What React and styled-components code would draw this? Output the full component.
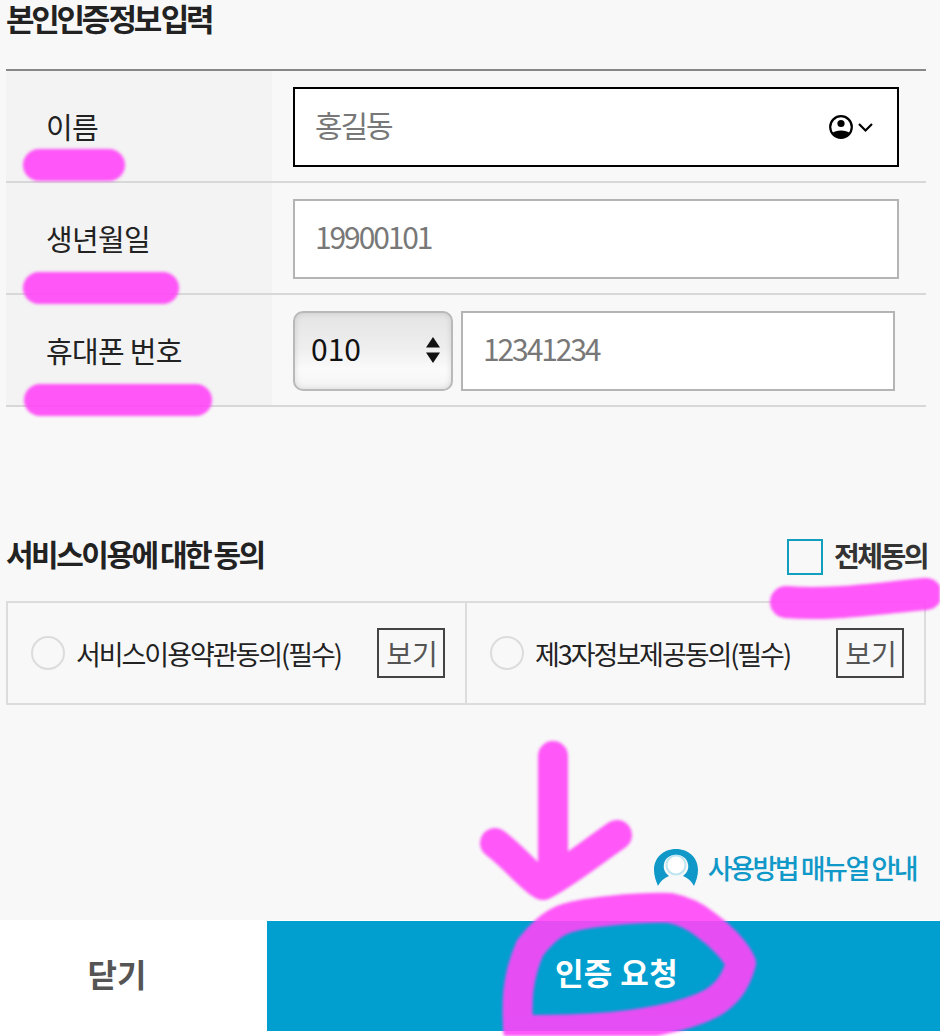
import React from "react";
import styled, { createGlobalStyle } from "styled-components";

const GlobalStyle = createGlobalStyle`
  html, body {
    margin: 0;
    padding: 0;
    background: #f8f8f8;
  }
  * {
    box-sizing: border-box;
    font-family: "Noto Sans CJK KR", "Noto Sans", sans-serif;
  }
  input::placeholder {
    color: #787878;
    opacity: 1;
  }
`;

const Page = styled.div`
  position: relative;
  width: 940px;
  height: 1036px;
  overflow: hidden;
  display: flex;
  flex-direction: column;
  background: #f8f8f8;
`;

const Title = styled.h2`
  margin: 0;
  padding-left: 6px;
  height: 38px;
  font-size: 31px;
  line-height: 36px;
  font-weight: 700;
  letter-spacing: -3.3px;
  word-spacing: -2px;
  color: #222;
`;

const Table = styled.div`
  margin: 31px 14px 0 6px;
  border-top: 2px solid #888;
`;

const Row = styled.div`
  display: flex;
  height: 112px;
  border-bottom: 2px solid #d8d8d8;
`;

const Label = styled.div`
  width: 266px;
  padding: 0 0 0 40px;
  display: flex;
  align-items: center;
  height: 110px;
  background: #f3f3f3;
  font-size: 29px;
  letter-spacing: -0.7px;
  color: #222;
`;

const Field = styled.div`
  flex: 1;
  display: flex;
  gap: 8px;
  padding: 16px 0 0 21px;
`;

const InputBox = styled.div`
  position: relative;
  width: ${props => props.$width}px;
  height: 80px;
  background: #fff;
  border: 2px solid ${props => (props.$focus ? "#000" : "#b4b4b4")};
`;

const TextInput = styled.input`
  width: 100%;
  height: 100%;
  padding: 0 0 6px 20px;
  border: 0;
  outline: 0;
  background: transparent;
  font-size: 30px;
  letter-spacing: -2.1px;
  color: #787878;
`;

const AutofillIcon = styled.svg`
  position: absolute;
  top: 25px;
  right: 22px;
`;

const SelectBox = styled.div`
  position: relative;
  width: 160px;
  height: 80px;
`;

const Select = styled.select`
  appearance: none;
  width: 100%;
  height: 100%;
  padding: 0 0 6px 16px;
  border: 2px solid #b9b9b9;
  border-radius: 10px;
  outline: 0;
  background: linear-gradient(#e4e4e4 0%, #eeeeee 45%, #fbfbfb 75%, #f3f3f3 100%);
  box-shadow: inset 0 0 6px rgba(0, 0, 0, 0.12);
  font-size: 30px;
  color: #111;
`;

const SelectArrows = styled.svg`
  position: absolute;
  top: 26px;
  right: 13px;
  pointer-events: none;
`;

const AgreeHeader = styled.div`
  display: flex;
  justify-content: space-between;
  align-items: center;
  height: 36px;
  margin: 132px 13px 0 6px;
`;

const AgreeTitle = styled.h3`
  margin: 0 0 8px;
  font-size: 30px;
  font-weight: 700;
  letter-spacing: -2.5px;
  word-spacing: -1px;
  color: #222;
`;

const AllAgree = styled.label`
  display: flex;
  align-items: center;
  gap: 11px;
  font-size: 28px;
  font-weight: 700;
  letter-spacing: -2.5px;
  color: #333;
`;

const AllAgreeText = styled.span`
  margin-bottom: 4px;
`;

const Checkbox = styled.span`
  width: 36px;
  height: 36px;
  border: 2px solid #119fbd;
`;

const AgreeBox = styled.div`
  display: flex;
  height: 104px;
  margin: 26px 14px 0 6px;
  border: 2px solid #dcdcdc;
`;

const AgreeItem = styled.div`
  display: flex;
  align-items: center;
  width: ${props => props.$width}px;
  padding-left: 23px;
  border-left: ${props => (props.$divided ? "2px solid #dcdcdc" : "0")};
`;

const Radio = styled.span`
  flex: none;
  width: 34px;
  height: 34px;
  border: 2px solid #dcdcdc;
  border-radius: 50%;
`;

const AgreeText = styled.span`
  flex: 1;
  margin-left: 11px;
  font-size: 27px;
  letter-spacing: -2.05px;
  white-space: nowrap;
  color: #222;
`;

const ViewButton = styled.button`
  flex: none;
  width: 68px;
  height: 50px;
  margin-right: 20px;
  padding: 0 0 0 2px;
  background: transparent;
  border: 2px solid #444;
  font-size: 28px;
  color: #555;
`;

const ManualLink = styled.a`
  display: flex;
  align-items: center;
  justify-content: flex-end;
  gap: 10px;
  margin: 143px 24px 0 0;
  font-size: 27px;
  font-weight: 500;
  letter-spacing: -2.5px;
  color: #1098c8;
`;

const Footer = styled.div`
  position: absolute;
  left: 0;
  right: 0;
  bottom: 0;
  height: 116px;
  display: flex;
  background: #fff;
`;

const CloseButton = styled.button`
  width: 267px;
  height: 110px;
  padding: 0 33px 5px 0;
  border: 0;
  background: #fff;
  font-size: 32px;
  font-weight: 700;
  color: #555;
`;

const SubmitButton = styled.button`
  flex: 1;
  height: 110px;
  margin-top: 1px;
  padding: 0 0 9px 26px;
  border: 0;
  background: #009fd0;
  font-size: 31px;
  font-weight: 700;
  letter-spacing: 0.4px;
  color: #fff;
`;

const Scribble = styled.svg`
  position: absolute;
  left: 0;
  top: 0;
  pointer-events: none;
  filter: blur(1.5px);
`;

const Mark = styled.path`
  fill: none;
  stroke: #ff45f8;
  stroke-linecap: round;
  stroke-linejoin: round;
  stroke-width: ${props => props.$w || 32}px;
`;

const App = () => (
  <Page>
    <GlobalStyle />
    <Title>본인인증 정보 입력</Title>
    <Table>
      <Row>
        <Label>이름</Label>
        <Field>
          <InputBox $width={606} $focus>
            <TextInput placeholder="홍길동" />
            <AutofillIcon width="47" height="26" viewBox="0 0 47 26">
              <circle cx="13" cy="13" r="10.8" fill="none" stroke="#000" strokeWidth="2.2" />
              <circle cx="13" cy="9.5" r="3.6" fill="#000" />
              <path d="M4.5 19 C7 15.5 19 15.5 21.5 19 C18 25 8 25 4.5 19 Z" fill="#000" />
              <path d="M31 10 L37.5 16.5 L44 10" fill="none" stroke="#000" strokeWidth="2.2" />
            </AutofillIcon>
          </InputBox>
        </Field>
      </Row>
      <Row>
        <Label>생년월일</Label>
        <Field>
          <InputBox $width={606}>
            <TextInput placeholder="19900101" />
          </InputBox>
        </Field>
      </Row>
      <Row>
        <Label>휴대폰 번호</Label>
        <Field>
          <SelectBox>
            <Select defaultValue="010">
              <option>010</option>
              <option>011</option>
              <option>016</option>
            </Select>
            <SelectArrows width="14" height="26" viewBox="0 0 14 26">
              <path d="M7 0 L14 10.5 L0 10.5 Z M0 15.5 L14 15.5 L7 26 Z" fill="#111" />
            </SelectArrows>
          </SelectBox>
          <InputBox $width={434}>
            <TextInput placeholder="12341234" />
          </InputBox>
        </Field>
      </Row>
    </Table>

    <AgreeHeader>
      <AgreeTitle>서비스이용에 대한 동의</AgreeTitle>
      <AllAgree>
        <Checkbox />
        <AllAgreeText>전체동의</AllAgreeText>
      </AllAgree>
    </AgreeHeader>
    <AgreeBox>
      <AgreeItem $width={457}>
        <Radio />
        <AgreeText>서비스이용약관동의(필수)</AgreeText>
        <ViewButton>보기</ViewButton>
      </AgreeItem>
      <AgreeItem $width={459} $divided>
        <Radio />
        <AgreeText>제3자정보제공동의(필수)</AgreeText>
        <ViewButton>보기</ViewButton>
      </AgreeItem>
    </AgreeBox>

    <ManualLink>
      <svg width="44" height="38" viewBox="0 0 44 38">
        <path
          d="M22 0 C35 0 44 9 44 21 C44 27 42 32 40 37 C37 31 33 29 29 27 C33 24 35 20 34 15 C33 9 28 6 22 6 C16 6 11 9 10 15 C9 20 11 24 15 27 C11 29 7 31 4 37 C2 32 0 27 0 21 C0 9 9 0 22 0 Z"
          fill="#1098c8"
        />
        <circle cx="22" cy="16" r="9.5" fill="#fff" stroke="#bfe5f0" strokeWidth="2" />
      </svg>
      사용방법 매뉴얼 안내
    </ManualLink>

    <Footer>
      <CloseButton>닫기</CloseButton>
      <SubmitButton>인증 요청</SubmitButton>
    </Footer>

    <Scribble width="940" height="1036" viewBox="0 0 940 1036">
      <g opacity="0.9">
        <Mark d="M39 165 L109 165" />
        <Mark d="M39 288 L163 288" />
        <Mark d="M40 400 L196 400" />
        <Mark d="M786 602 C830 606 880 598 926 594" />
        <Mark $w={30} d="M553 756 L553 870 M495 843 C515 858 532 880 543 885 C565 874 595 850 617 835" />
        <Mark
          $w={30}
          d="M518 1028 C517 1005 516 980 530 948 C540 935 550 925 562 920 C580 912 640 907 670 908 C690 912 700 920 706 925 C720 935 735 950 741 963 C735 985 725 995 712 1003 C695 1012 680 1016 660 1020 C640 1024 620 1027 597 1028 C570 1030 545 1030 518 1030"
        />
      </g>
    </Scribble>
  </Page>
);

export default App;
